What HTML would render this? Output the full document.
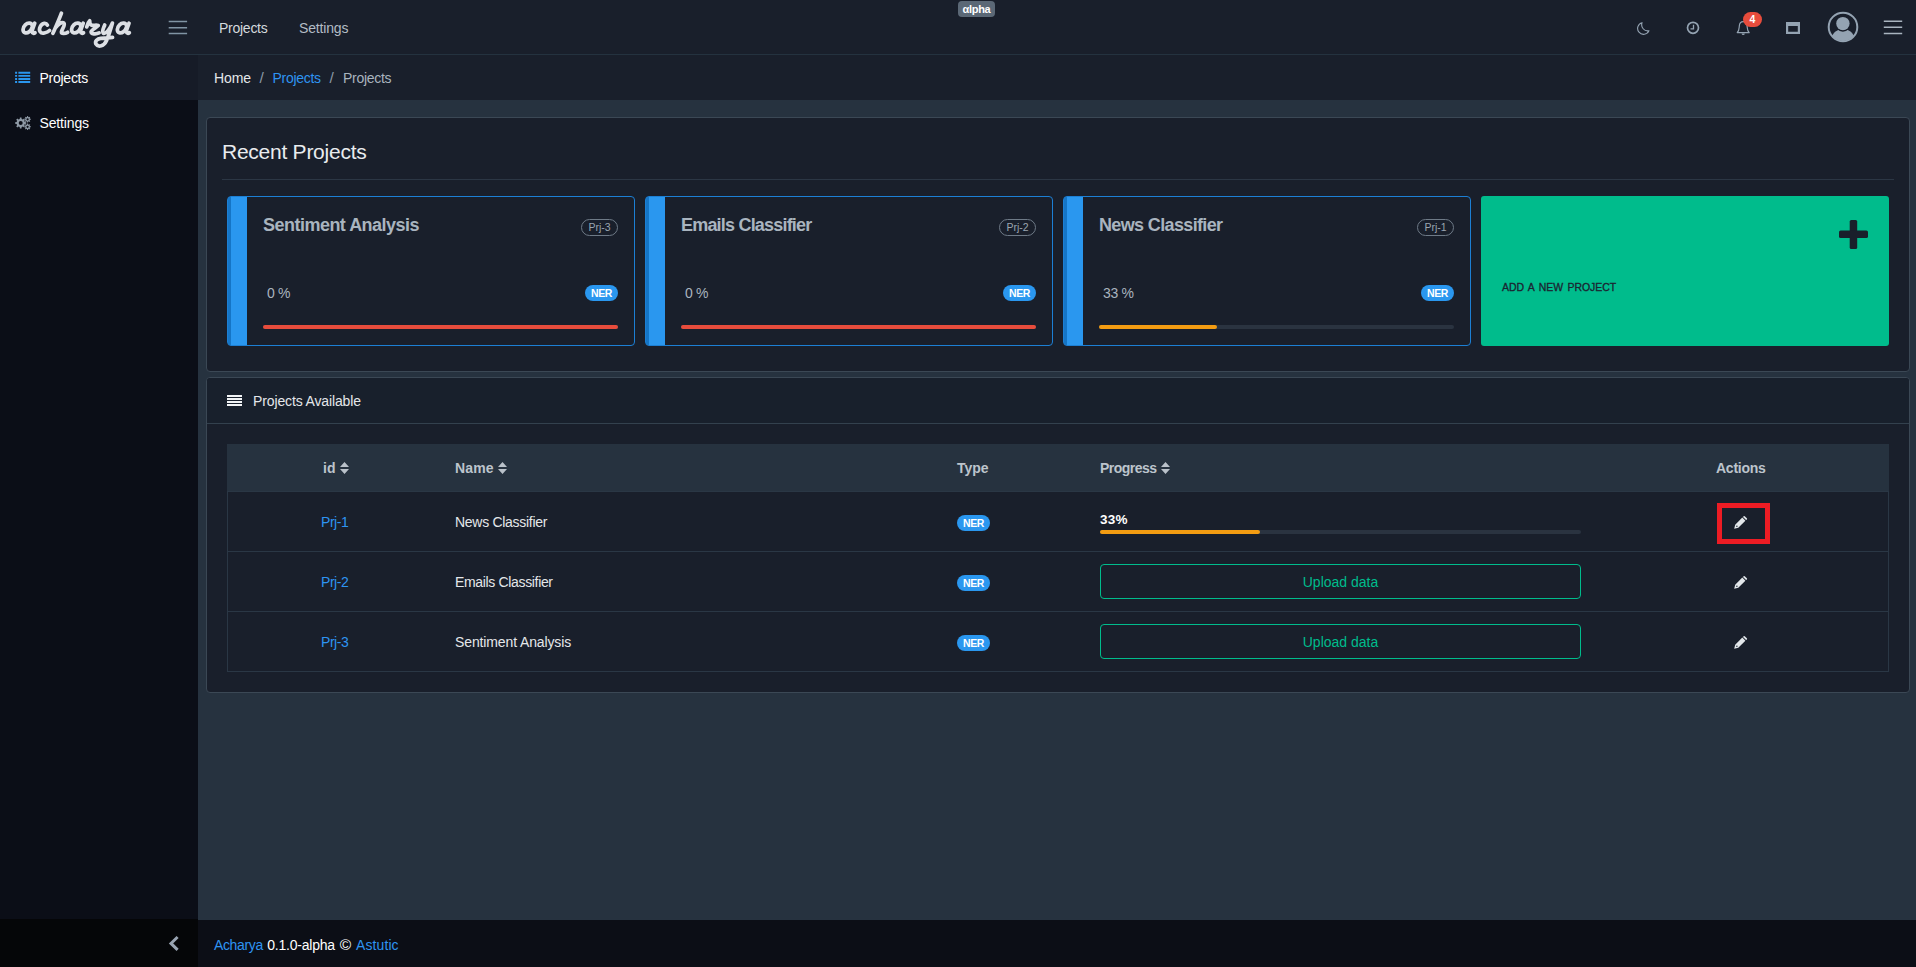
<!DOCTYPE html>
<html lang="en">
<head>
<meta charset="utf-8">
<title>Acharya - Projects</title>
<style>
*{box-sizing:border-box;margin:0;padding:0}
html,body{width:1916px;height:967px;overflow:hidden}
body{font-family:"Liberation Sans",sans-serif;font-size:14px;color:#e4e7ea;background:#26323f;position:relative}
.abs{position:absolute}
.t{position:absolute;white-space:nowrap;line-height:20px;height:20px}
a{color:#2e94f2;text-decoration:none}
/* header */
#header{left:0;top:0;width:1916px;height:55px;background:#191f2b;border-bottom:1px solid #24323f}
/* sidebar */
#sidebar{left:0;top:55px;width:198px;height:865px;background:#0b0e17}
#sb-active{left:0;top:55px;width:198px;height:45px;background:#161b27}
#sb-min{left:0;top:919px;width:198px;height:48px;background:#050608}
/* breadcrumb */
#crumb{left:198px;top:55px;width:1718px;height:45px;background:#191f2b}
/* footer */
#footer{left:198px;top:920px;width:1718px;height:47px;background:#0c0e16}
/* cards */
.card{background:#191f2b;border:1px solid #3b4855;border-radius:4px}
.pcard{background:#191f2b;border:1px solid #1c7fd4;border-radius:4px;height:150px;width:408px;top:196px;overflow:hidden}
.pcard .stripe{position:absolute;left:0;top:0;width:19px;height:148px;background:#2a97ef;border-left:3px solid #1575c6}
.ptitle{font-weight:bold;font-size:18px;color:#a9b4bf;line-height:24px;height:24px}
.pill-o{position:absolute;border:1px solid #6e7a87;border-radius:9px;height:17px;width:37px;font-size:10.5px;line-height:15px;text-align:center;color:#9aa5b1}
.ner{position:absolute;background:#2a97ef;border-radius:8px;height:16px;width:33px;font-size:10.5px;line-height:16px;text-align:center;color:#fff;font-weight:bold;letter-spacing:-0.4px}
.pct{color:#a9b4bf}
.bar{position:absolute;height:4px;border-radius:2px;background:#2a3340}
.bar i{position:absolute;left:0;top:0;height:4px;border-radius:2px;display:block}
.th{font-weight:bold;color:#bcc4cc}
.row{position:absolute;left:227px;width:1662px;height:60px;border-top:1px solid #2a3745;border-left:1px solid #2a3745;border-right:1px solid #2a3745}
.upl{position:absolute;left:1100px;width:481px;height:35px;border:1px solid #00bc8c;border-radius:4px;color:#00bc8c;text-align:center;line-height:33px;padding-top:1.3px}
</style>
</head>
<body>
<!-- HEADER -->
<div id="header" class="abs"></div>
<div id="sidebar" class="abs"></div>
<div id="sb-active" class="abs"></div>
<div id="sb-min" class="abs"></div>
<div id="crumb" class="abs"></div>
<div id="footer" class="abs"></div>

<!-- header text -->
<div class="t" style="left:219px;top:18px;color:#d5dade;letter-spacing:-0.26px">Projects</div>
<div class="t" style="left:299px;top:18px;color:#b3bcc5;letter-spacing:-0.17px">Settings</div>

<!-- sidebar text -->
<div class="t" style="left:39.5px;top:68px;color:#fff;letter-spacing:-0.26px">Projects</div>
<div class="t" style="left:39.5px;top:113px;color:#fff;letter-spacing:-0.14px">Settings</div>

<!-- breadcrumb -->
<div class="t" style="left:214px;top:68px;color:#e4e7ea;letter-spacing:-0.1px">Home</div>
<div class="t" style="left:259.6px;top:68px;color:#8a97a5;font-size:15.5px">/</div>
<div class="t" style="left:272.5px;top:68px;color:#2e94f2;letter-spacing:-0.29px">Projects</div>
<div class="t" style="left:329.6px;top:68px;color:#8a97a5;font-size:15.5px">/</div>
<div class="t" style="left:343px;top:68px;color:#a9b4bf;letter-spacing:-0.29px">Projects</div>

<!-- CARD 1 -->
<div class="abs card" style="left:206px;top:117px;width:1704px;height:255px"></div>
<div class="t" style="left:222px;top:137px;font-size:21px;line-height:30px;height:30px;color:#e9ecef;letter-spacing:-0.25px">Recent Projects</div>
<div class="abs" style="left:222px;top:179px;width:1672px;height:1px;background:#2b3644"></div>

<div class="abs pcard" style="left:227px"><div class="stripe"></div></div>
<div class="abs pcard" style="left:645px"><div class="stripe"></div></div>
<div class="abs pcard" style="left:1063px"><div class="stripe"></div></div>
<div class="abs" style="left:1481px;top:196px;width:408px;height:150px;background:#00bc8c;border-radius:3px"></div>

<div class="t ptitle" style="left:263px;top:213px;letter-spacing:-0.52px">Sentiment Analysis</div>
<div class="t ptitle" style="left:681px;top:213px;letter-spacing:-0.8px">Emails Classifier</div>
<div class="t ptitle" style="left:1099px;top:213px;letter-spacing:-0.64px">News Classifier</div>

<div class="pill-o" style="left:581px;top:219px">Prj-3</div>
<div class="pill-o" style="left:999px;top:219px">Prj-2</div>
<div class="pill-o" style="left:1417px;top:219px">Prj-1</div>

<div class="t pct" style="left:267px;top:283px;letter-spacing:-0.37px">0 %</div>
<div class="t pct" style="left:685px;top:283px;letter-spacing:-0.37px">0 %</div>
<div class="t pct" style="left:1103px;top:283px;letter-spacing:-0.3px">33 %</div>

<div class="ner" style="left:585px;top:285px">NER</div>
<div class="ner" style="left:1003px;top:285px">NER</div>
<div class="ner" style="left:1421px;top:285px">NER</div>

<div class="bar" style="left:263px;top:325px;width:355px"><i style="width:355px;background:#e74c3c"></i></div>
<div class="bar" style="left:681px;top:325px;width:355px"><i style="width:355px;background:#e74c3c"></i></div>
<div class="bar" style="left:1099px;top:325px;width:355px"><i style="width:118px;background:#f39c12"></i></div>

<div class="t" style="left:1502px;top:277px;font-size:10.5px;-webkit-text-stroke:0.3px #1c2431;color:#1c2431;letter-spacing:-0.06px;word-spacing:1.6px">ADD A NEW PROJECT</div>

<!-- CARD 2 -->
<div class="abs card" style="left:206px;top:377px;width:1704px;height:316px"></div>
<div class="abs" style="left:207px;top:378px;width:1702px;height:45px;background:#18202c;border-radius:3px 3px 0 0"></div>
<div class="abs" style="left:207px;top:423px;width:1702px;height:1px;background:#33414e"></div>
<div class="t" style="left:253px;top:390.75px;color:#e4e7ea;letter-spacing:-0.13px">Projects Available</div>

<!-- table -->
<div class="abs" style="left:227px;top:444px;width:1662px;height:47px;background:#26323f"></div>
<div class="t th" style="left:323px;top:458px">id</div>
<div class="t th" style="left:455px;top:458px;letter-spacing:0.15px">Name</div>
<div class="t th" style="left:957px;top:458px">Type</div>
<div class="t th" style="left:1100px;top:458px;letter-spacing:-0.54px">Progress</div>
<div class="t th" style="left:1716px;top:458px;letter-spacing:-0.26px">Actions</div>

<div class="row" style="top:491px"></div>
<div class="row" style="top:551px"></div>
<div class="row" style="top:611px;height:61px;border-bottom:1px solid #2a3745"></div>

<div class="t" style="left:321px;top:512px;letter-spacing:-0.44px"><a>Prj-1</a></div>
<div class="t" style="left:321px;top:572px;letter-spacing:-0.44px"><a>Prj-2</a></div>
<div class="t" style="left:321px;top:632px;letter-spacing:-0.44px"><a>Prj-3</a></div>
<div class="t" style="left:455px;top:512px;letter-spacing:-0.29px">News Classifier</div>
<div class="t" style="left:455px;top:572px;letter-spacing:-0.34px">Emails Classifier</div>
<div class="t" style="left:455px;top:632px;letter-spacing:-0.12px">Sentiment Analysis</div>
<div class="ner" style="left:957px;top:515px">NER</div>
<div class="ner" style="left:957px;top:575px">NER</div>
<div class="ner" style="left:957px;top:635px">NER</div>

<div class="t" style="left:1100px;top:510px;font-weight:bold;color:#fff;font-size:13.5px;letter-spacing:0.2px">33%</div>
<div class="bar" style="left:1100px;top:530px;width:481px"><i style="width:160px;background:#f39c12"></i></div>
<div class="upl" style="top:564px">Upload data</div>
<div class="upl" style="top:624px">Upload data</div>

<div class="abs" style="left:1717px;top:503px;width:53px;height:41px;border:5px solid #ed1c24"></div>

<!-- footer -->
<div class="t" style="left:214px;top:935px;letter-spacing:-0.36px"><a>Acharya</a></div>
<div class="t" style="left:267.3px;top:935px;color:#fff;letter-spacing:-0.22px">0.1.0-alpha</div>
<div class="t" style="left:339.8px;top:935px;color:#fff;font-size:15.5px">©</div>
<div class="t" style="left:356px;top:935px;letter-spacing:0.1px"><a>Astutic</a></div>

<!-- alpha badge -->
<div class="abs" style="left:958px;top:1px;width:37px;height:16px;background:#5b6876;border-radius:4px;color:#fff;font-size:11px;font-weight:bold;line-height:17px;text-align:center;letter-spacing:-0.3px">αlpha</div>

<!-- ICONS -->
<svg class="abs" id="logo" style="left:0;top:0" width="150" height="55" viewBox="0 0 150 55"><path d="M 32.27 25.27 C 31.32 22.75 27.90 22.27 25.28 24.89 C 22.66 27.51 22.09 31.79 25.04 32.79 C 27.90 33.69 30.85 30.84 32.04 27.51 C 32.51 26.18 32.56 25.75 32.27 25.27 M 34.75 23.22 C 33.70 26.22 32.04 29.79 32.18 31.69 C 32.32 33.60 34.08 33.50 35.03 32.74 M 47.40 25.03 C 46.22 22.75 42.41 22.56 40.27 26.70 C 38.13 30.98 40.74 33.84 44.31 33.03 C 46.45 32.55 48.36 31.69 49.55 30.51 M 61.44 13.14 C 58.82 20.27 55.49 27.41 52.88 33.36 M 55.73 27.65 C 57.87 24.08 61.68 21.70 63.96 23.13 C 65.72 24.56 61.68 29.79 61.44 31.93 C 61.44 33.84 65.01 33.84 67.63 32.27 M 80.77 25.27 C 79.82 22.75 76.40 22.27 73.78 24.89 C 71.16 27.51 70.59 31.79 73.54 32.79 C 76.40 33.69 79.35 30.84 80.54 27.51 C 81.01 26.18 81.06 25.75 80.77 25.27 M 83.25 23.22 C 82.20 26.22 80.54 29.79 80.68 31.69 C 80.82 33.60 82.58 33.50 83.53 32.74 M 86.71 26.94 C 87.42 24.08 88.61 21.94 89.70 20.85 C 89.56 23.61 90.27 25.03 92.18 25.27 C 94.56 25.51 96.46 24.80 98.27 25.51 C 96.94 27.41 91.70 29.79 91.13 31.69 C 90.85 34.07 95.98 34.45 99.08 32.88 M 104.69 25.03 C 103.84 27.41 101.46 31.69 103.36 33.22 C 105.98 34.55 110.26 28.36 112.40 23.13 M 112.40 23.13 C 110.74 28.84 108.36 36.45 106.45 40.74 C 104.07 45.97 98.36 47.87 95.98 44.07 C 94.56 41.21 97.41 38.83 100.74 38.36 C 104.55 37.79 108.83 37.64 112.54 37.40 M 126.57 25.27 C 125.62 22.75 122.20 22.27 119.58 24.89 C 116.96 27.51 116.39 31.79 119.34 32.79 C 122.20 33.69 125.15 30.84 126.34 27.51 C 126.81 26.18 126.86 25.75 126.57 25.27 M 129.05 23.22 C 128.00 26.22 126.34 29.79 126.48 31.69 C 126.62 33.60 128.38 33.50 129.33 32.74" stroke="#dcdfe4" stroke-width="3.75" fill="none" stroke-linecap="round" stroke-linejoin="round"/></svg>
<!-- left hamburger -->
<svg class="abs" style="left:168px;top:20px" width="20" height="16" viewBox="0 0 20 16"><path d="M0.7 1.6H19.1M0.7 7.7H19.1M0.7 13.6H19.1" stroke="#8094a4" stroke-width="1.5" fill="none"/></svg>
<!-- right hamburger -->
<svg class="abs" style="left:1883px;top:20px" width="20" height="16" viewBox="0 0 20 16"><path d="M0.8 1.3H19.2M0.8 7.3H19.2M0.8 13.5H19.2" stroke="#a9b4bf" stroke-width="1.5" fill="none"/></svg>
<!-- moon -->
<svg class="abs" style="left:1635.5px;top:20.6px" width="14.8" height="14.8" viewBox="0 0 16 16"><path d="M6.6 1.8 A6.4 6.4 0 1 0 14 10.6 A6.6 6.6 0 0 1 6.6 1.8Z" stroke="#94a3b2" stroke-width="1.2" fill="none" stroke-linejoin="round"/></svg>
<!-- clock -->
<svg class="abs" style="left:1685px;top:20px" width="16" height="16" viewBox="0 0 16 16"><circle cx="8" cy="7.8" r="5.5" stroke="#94a3b2" stroke-width="1.7" fill="none"/><path d="M8.5 4.8V8.8H5.5" stroke="#94a3b2" stroke-width="1.3" fill="none"/></svg>
<!-- bell -->
<svg class="abs" style="left:1735px;top:20px" width="16" height="16" viewBox="0 0 16 16"><path d="M2.2 12.6 C4.3 10.6 4.1 8.6 4.3 6 C4.5 3.4 5.8 1.7 8.2 1.7 C10.6 1.7 11.9 3.4 12.1 6 C12.3 8.6 12.1 10.6 14.2 12.6 Z" stroke="#94a3b2" stroke-width="1.2" fill="none" stroke-linejoin="round"/><path d="M6.6 13.4 a1.6 1.6 0 0 0 3.2 0Z" fill="#94a3b2"/></svg>
<div class="abs" style="left:1743px;top:12px;width:19px;height:15px;border-radius:8px;background:#e74c3c;color:#fff;font-size:10.5px;font-weight:bold;line-height:15px;text-align:center">4</div>
<!-- window -->
<svg class="abs" style="left:1786px;top:22px" width="14" height="12" viewBox="0 0 14 12"><path d="M0 0H14V12H0Z M2.2 3.9V9.8H11.8V3.9Z" fill="#94a3b2" fill-rule="evenodd"/></svg>
<!-- avatar -->
<svg class="abs" style="left:1827px;top:11px" width="32" height="32" viewBox="0 0 32 32"><defs><clipPath id="avc"><circle cx="16" cy="16" r="14"/></clipPath></defs><g clip-path="url(#avc)"><ellipse cx="16" cy="31" rx="12.6" ry="13" fill="#94a3b2"/><circle cx="15.9" cy="12.6" r="8.1" fill="#191f2b"/><circle cx="15.9" cy="12.6" r="6.7" fill="#94a3b2"/></g><circle cx="16" cy="16" r="14.3" stroke="#94a3b2" stroke-width="2" fill="none"/></svg>
<!-- sidebar list icon -->
<svg class="abs" style="left:15px;top:71px" width="16" height="13" viewBox="0 0 16 13"><path d="M0.1 0.8h2v1.9h-2zM3.4 0.8h11.8v1.9H3.4zM0.1 3.9h2v1.9h-2zM3.4 3.9h11.8v1.9H3.4zM0.1 7h2v1.9h-2zM3.4 7h11.8v1.9H3.4zM0.1 10.1h2v1.9h-2zM3.4 10.1h11.8v1.9H3.4z" fill="#2a97ef"/></svg>
<!-- cogs -->
<svg class="abs" style="left:15px;top:116px" width="17" height="15" viewBox="0 0 17 15"><path fill="#8f9aa6" fill-rule="evenodd" d="M11.24 6.21 L11.24 7.79 L9.78 7.98 L9.28 9.19 L10.18 10.36 L9.06 11.48 L7.89 10.58 L6.68 11.08 L6.49 12.54 L4.91 12.54 L4.72 11.08 L3.51 10.58 L2.34 11.48 L1.22 10.36 L2.12 9.19 L1.62 7.98 L0.16 7.79 L0.16 6.21 L1.62 6.02 L2.12 4.81 L1.22 3.64 L2.34 2.52 L3.51 3.42 L4.72 2.92 L4.91 1.46 L6.49 1.46 L6.68 2.92 L7.89 3.42 L9.06 2.52 L10.18 3.64 L9.28 4.81 L9.78 6.02Z M3.70 7.00 a2.00 2.00 0 1 0 4.00 0 a2.00 2.00 0 1 0 -4.00 0Z M15.87 2.84 L15.87 3.76 L14.93 3.86 L14.65 4.55 L15.24 5.28 L14.58 5.94 L13.85 5.35 L13.16 5.63 L13.06 6.57 L12.14 6.57 L12.04 5.63 L11.35 5.35 L10.62 5.94 L9.96 5.28 L10.55 4.55 L10.27 3.86 L9.33 3.76 L9.33 2.84 L10.27 2.74 L10.55 2.05 L9.96 1.32 L10.62 0.66 L11.35 1.25 L12.04 0.97 L12.14 0.03 L13.06 0.03 L13.16 0.97 L13.85 1.25 L14.58 0.66 L15.24 1.32 L14.65 2.05 L14.93 2.74Z M11.50 3.30 a1.10 1.10 0 1 0 2.20 0 a1.10 1.10 0 1 0 -2.20 0Z M15.87 10.34 L15.87 11.26 L14.93 11.36 L14.65 12.05 L15.24 12.78 L14.58 13.44 L13.85 12.85 L13.16 13.13 L13.06 14.07 L12.14 14.07 L12.04 13.13 L11.35 12.85 L10.62 13.44 L9.96 12.78 L10.55 12.05 L10.27 11.36 L9.33 11.26 L9.33 10.34 L10.27 10.24 L10.55 9.55 L9.96 8.82 L10.62 8.16 L11.35 8.75 L12.04 8.47 L12.14 7.53 L13.06 7.53 L13.16 8.47 L13.85 8.75 L14.58 8.16 L15.24 8.82 L14.65 9.55 L14.93 10.24Z M11.50 10.80 a1.10 1.10 0 1 0 2.20 0 a1.10 1.10 0 1 0 -2.20 0Z"/></svg>
<!-- card header icon -->
<svg class="abs" style="left:227px;top:395px" width="15" height="12" viewBox="0 0 15 12"><path d="M0 0h15v2H0zM0 3h15v2H0zM0 6h15v2H0zM0 9h15v2H0z" fill="#f2f4f6"/></svg>
<!-- sort icons -->
<svg class="abs sorti" style="left:339.5px;top:462px" width="9" height="12" viewBox="0 0 9 12"><path d="M4.5 0L9 5H0ZM0 7H9L4.5 12Z" fill="#b9c1c9"/></svg>
<svg class="abs sorti" style="left:497.5px;top:462px" width="9" height="12" viewBox="0 0 9 12"><path d="M4.5 0L9 5H0ZM0 7H9L4.5 12Z" fill="#b9c1c9"/></svg>
<svg class="abs sorti" style="left:1160.5px;top:462px" width="9" height="12" viewBox="0 0 9 12"><path d="M4.5 0L9 5H0ZM0 7H9L4.5 12Z" fill="#b9c1c9"/></svg>
<!-- plus -->
<svg class="abs" style="left:1839px;top:220px" width="29" height="29" viewBox="0 0 29 29"><rect x="10.7" y="0" width="7.5" height="29" rx="1.6" fill="#191f2b"/><rect x="0" y="10.6" width="29" height="7.5" rx="1.6" fill="#191f2b"/></svg>
<!-- pencils -->
<svg class="abs" style="left:1733.5px;top:515.5px" width="14" height="13" viewBox="0 0 14 13"><g fill="#e3e7eb"><path d="M0.2 12.8L1.2 8.7L8.3 1.6L11.4 4.7L4.3 11.8Z"/><circle cx="2.9" cy="10.3" r="0.75" fill="#232b3a"/><path d="M9.0 0.9L9.6 0.3Q10.3 -0.2 11 0.4L12.8 2.2Q13.4 2.9 12.8 3.6L12.1 4.1Z"/></g></svg>
<svg class="abs" style="left:1733.5px;top:575.5px" width="14" height="13" viewBox="0 0 14 13"><g fill="#e3e7eb"><path d="M0.2 12.8L1.2 8.7L8.3 1.6L11.4 4.7L4.3 11.8Z"/><circle cx="2.9" cy="10.3" r="0.75" fill="#232b3a"/><path d="M9.0 0.9L9.6 0.3Q10.3 -0.2 11 0.4L12.8 2.2Q13.4 2.9 12.8 3.6L12.1 4.1Z"/></g></svg>
<svg class="abs" style="left:1733.5px;top:635.5px" width="14" height="13" viewBox="0 0 14 13"><g fill="#e3e7eb"><path d="M0.2 12.8L1.2 8.7L8.3 1.6L11.4 4.7L4.3 11.8Z"/><circle cx="2.9" cy="10.3" r="0.75" fill="#232b3a"/><path d="M9.0 0.9L9.6 0.3Q10.3 -0.2 11 0.4L12.8 2.2Q13.4 2.9 12.8 3.6L12.1 4.1Z"/></g></svg>
<!-- chevron -->
<svg class="abs" style="left:166.6px;top:934px" width="14" height="18" viewBox="0 0 14 18"><path d="M10.6 3L4 9.4L10.6 15.8" stroke="#98a3b1" stroke-width="3" fill="none"/></svg>
</body>
</html>
